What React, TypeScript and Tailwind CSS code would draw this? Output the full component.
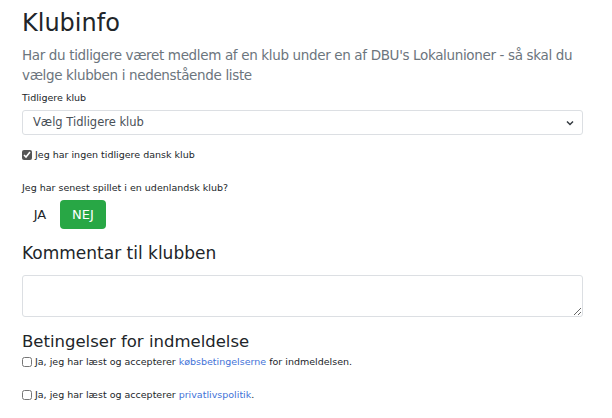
import { useState } from "react";

const font = { fontFamily: '"DejaVu Sans", "Liberation Sans", sans-serif' };

function Check({ checked, onChange }: { checked: boolean; onChange: () => void }) {
  return (
    <input
      type="checkbox"
      checked={checked}
      onChange={onChange}
      className="w-[10px] h-[10px] m-0 accent-[#555] shrink-0"
    />
  );
}

export default function App() {
  const [noClub, setNoClub] = useState(true);
  const [foreign, setForeign] = useState<"ja" | "nej">("nej");
  const [terms, setTerms] = useState(false);
  const [privacy, setPrivacy] = useState(false);

  return (
    <div className="w-[612px] h-[418px] bg-white text-[#212529] px-[22px] pt-[7px] overflow-hidden" style={font}>
      <h1 className="text-[24px] leading-[32px] m-0">Klubinfo</h1>
      <p className="mt-[6px] w-[561px] text-[13.5px] leading-[20px] text-[#6c757d] tracking-[-0.35px]">
        Har du tidligere været medlem af en klub under en af DBU's Lokalunioner - så skal du vælge klubben i
        nedenstående liste
      </p>
      <label className="block mt-[6px] text-[9.5px] leading-[14px]">Tidligere klub</label>
      <div
        role="combobox"
        className="flex items-center mt-[5px] w-[561px] h-[25px] border border-[#dcdfe3] rounded-[3px] bg-white text-[11.5px] text-[#495057]"
      >
        <span className="ml-[10px] flex-1">Vælg Tidligere klub</span>
        <svg className="mr-[8px]" width="8" height="6" viewBox="0 0 8 6">
          <path d="M1 1.5 L4 4.5 L7 1.5" fill="none" stroke="#343a40" strokeWidth="1.5" />
        </svg>
      </div>
      <label className="flex items-center gap-[3px] mt-[13px] text-[9.5px] leading-[14px]">
        <Check checked={noClub} onChange={() => setNoClub(!noClub)} />
        <span>Jeg har ingen tidligere dansk klub</span>
      </label>
      <div className="mt-[19px] text-[9.5px] leading-[14px]">Jeg har senest spillet i en udenlandsk klub?</div>
      <div className="flex mt-[5px] gap-[2px]">
        <button
          onClick={() => setForeign("ja")}
          className={`w-[36px] h-[29px] rounded-[4px] text-[13px] ${foreign === "ja" ? "bg-[#28a745] text-white" : "text-[#212529]"}`}
        >
          JA
        </button>
        <button
          onClick={() => setForeign("nej")}
          className={`w-[46px] h-[29px] rounded-[4px] text-[13px] ${foreign === "nej" ? "bg-[#28a745] text-white" : "text-[#212529]"}`}
        >
          NEJ
        </button>
      </div>
      <h2 className="mt-[12px] text-[17px] leading-[24px]">Kommentar til klubben</h2>
      <textarea className="block mt-[10px] w-[561px] h-[42px] border border-[#dcdfe3] rounded-[3px] outline-none resize-y" />
      <h2 className="mt-[13px] text-[16.5px] leading-[24px]">Betingelser for indmeldelse</h2>
      <label className="flex items-center gap-[3px] mt-[1px] text-[9.5px] leading-[14px]">
        <Check checked={terms} onChange={() => setTerms(!terms)} />
        <span>
          Ja, jeg har læst og accepterer <a className="text-[#3f72d8]">købsbetingelserne</a> for indmeldelsen.
        </span>
      </label>
      <label className="flex items-center gap-[3px] mt-[19px] text-[9.5px] leading-[14px]">
        <Check checked={privacy} onChange={() => setPrivacy(!privacy)} />
        <span>
          Ja, jeg har læst og accepterer <a className="text-[#3f72d8]">privatlivspolitik</a>.
        </span>
      </label>
    </div>
  );
}
